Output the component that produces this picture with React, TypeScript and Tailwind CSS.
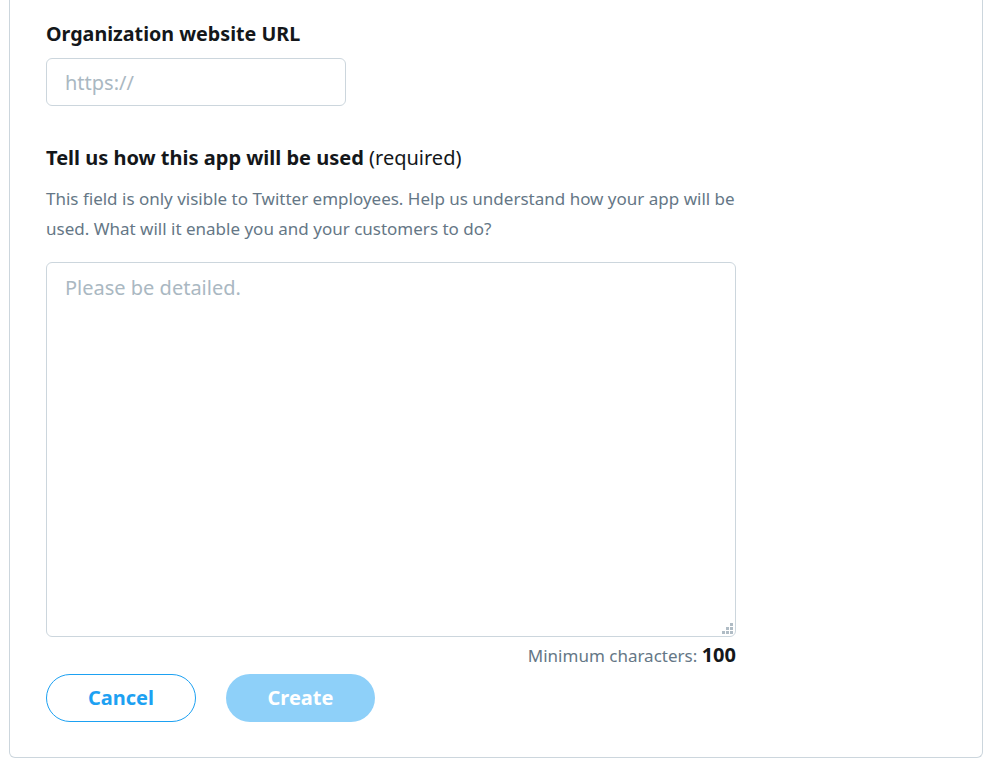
import React, { useState } from 'react';

const font = { fontFamily: '"Noto Sans", "Open Sans", sans-serif' };

const App: React.FC = () => {
  const [url, setUrl] = useState<string>('');
  const [usage, setUsage] = useState<string>('');

  return (
    <div className="min-h-screen bg-white pl-[9px] pr-[8px]" style={font}>
      <div className="border-x border-b border-[#ccd6dd] rounded-b-md px-[36px] pt-[20px] pb-[35px]">
        <div className="max-w-[690px]">
          <label htmlFor="url" className="block text-[19.7px] leading-[28px] font-bold text-[#14171a]">
            Organization website URL
          </label>
          <input
            id="url"
            type="text"
            placeholder="https://"
            value={url}
            onChange={(e) => setUrl(e.target.value)}
            className="mt-[10px] w-[300px] h-[48px] border border-[#ccd6dd] rounded-md px-[18px] text-[20px] text-[#14171a] placeholder:text-[#aab8c2] outline-none"
          />

          <h2 className="mt-[38px] text-[20px] leading-[28px] text-[#14171a]">
            <span className="font-bold">Tell us how this app will be used</span> (required)
          </h2>
          <p className="mt-[12px] text-[17px] leading-[30px] text-[#657786]">
            This field is only visible to Twitter employees. Help us understand how your app will be used. What will it enable you and your customers to do?
          </p>

          <div className="relative mt-[18px]">
            <textarea
              placeholder="Please be detailed."
              value={usage}
              onChange={(e) => setUsage(e.target.value)}
              className="block w-full h-[375px] resize-none border border-[#ccd6dd] rounded-md px-[18px] py-[10px] text-[20px] text-[#14171a] placeholder:text-[#aab8c2] outline-none"
            />
            {/* resize grip */}
            <svg className="absolute right-[3px] bottom-[3px]" width="11" height="11" viewBox="0 0 11 11" fill="#b0bcc5">
              <rect x="8" y="0" width="3" height="3" />
              <rect x="4" y="4" width="3" height="3" />
              <rect x="8" y="4" width="3" height="3" />
              <rect x="0" y="8" width="3" height="3" />
              <rect x="4" y="8" width="3" height="3" />
              <rect x="8" y="8" width="3" height="3" />
            </svg>
          </div>
          <div className="mt-[4px] text-right text-[17px] leading-[28px] text-[#657786]">
            Minimum characters: <span className="text-[20px] font-bold text-[#14171a]">100</span>
          </div>

          <div className="mt-[4px] flex gap-[30px]">
            <button className="w-[150px] h-[48px] rounded-full border border-[#1da1f2] text-[20px] font-bold text-[#1da1f2]">
              Cancel
            </button>
            <button disabled className="w-[149px] h-[48px] rounded-full bg-[#8ed0f9] text-[20px] font-bold text-white">
              Create
            </button>
          </div>
        </div>
      </div>
    </div>
  );
};

export default App;
